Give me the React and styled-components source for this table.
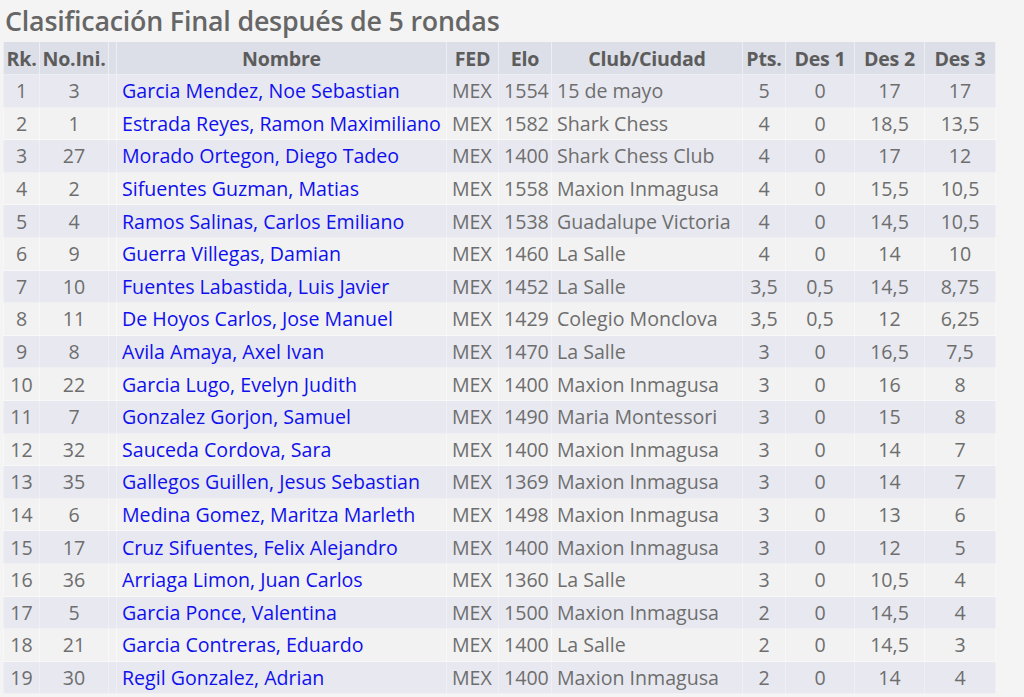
import React from "react";
import styled, { createGlobalStyle } from "styled-components";

const Global = createGlobalStyle`
  html, body { margin: 0; padding: 0; background: #f4f4f4; }
  body { font-family: "Open Sans", "Noto Sans", sans-serif; }
`;

const Page = styled.div`
  padding: 3px 0 0 3px;
  width: 992px;
`;

const Title = styled.h1`
  margin: 0 0 4px 2px;
  font-size: 26.8px;
  font-weight: 600;
  color: #666;
  line-height: 35px;
  letter-spacing: -0.2px;
`;

const Table = styled.table`
  border-collapse: collapse;
  width: 992px;
  table-layout: fixed;
  font-size: 19.6px;
  color: #6e6e6e;
`;

const Th = styled.th`
  background: #dcdfe7;
  color: #5c5c5c;
  font-weight: 700;
  height: 32px;
  padding: 0;
  text-align: center;
  border: 1px solid #eceef2;
  border-top: none;
  white-space: nowrap;
  letter-spacing: -0.2px;
`;

const Row = styled.tr`
  background: ${(p) => (p.$odd ? "#e8e9f0" : "#f2f2f2")};
  height: 32.6px;
`;

const Td = styled.td`
  padding: 0 ${(p) => (p.$pad ? "5px" : "0")};
  text-align: ${(p) => p.$align || "center"};
  border: 1px solid ${(p) => (p.$odd ? "#f0f0f4" : "#f8f8f8")};
  white-space: nowrap;
  overflow: hidden;
`;

const Link = styled.a`
  color: #1010ee;
  text-decoration: none;
`;

const cols = [36, 69, 8, 330, 52, 53, 191, 43, 69, 70, 71];

const data = [
  [1, 3, "Garcia Mendez, Noe Sebastian", 1554, "15 de mayo", "5", "0", "17", "17"],
  [2, 1, "Estrada Reyes, Ramon Maximiliano", 1582, "Shark Chess", "4", "0", "18,5", "13,5"],
  [3, 27, "Morado Ortegon, Diego Tadeo", 1400, "Shark Chess Club", "4", "0", "17", "12"],
  [4, 2, "Sifuentes Guzman, Matias", 1558, "Maxion Inmagusa", "4", "0", "15,5", "10,5"],
  [5, 4, "Ramos Salinas, Carlos Emiliano", 1538, "Guadalupe Victoria", "4", "0", "14,5", "10,5"],
  [6, 9, "Guerra Villegas, Damian", 1460, "La Salle", "4", "0", "14", "10"],
  [7, 10, "Fuentes Labastida, Luis Javier", 1452, "La Salle", "3,5", "0,5", "14,5", "8,75"],
  [8, 11, "De Hoyos Carlos, Jose Manuel", 1429, "Colegio Monclova", "3,5", "0,5", "12", "6,25"],
  [9, 8, "Avila Amaya, Axel Ivan", 1470, "La Salle", "3", "0", "16,5", "7,5"],
  [10, 22, "Garcia Lugo, Evelyn Judith", 1400, "Maxion Inmagusa", "3", "0", "16", "8"],
  [11, 7, "Gonzalez Gorjon, Samuel", 1490, "Maria Montessori", "3", "0", "15", "8"],
  [12, 32, "Sauceda Cordova, Sara", 1400, "Maxion Inmagusa", "3", "0", "14", "7"],
  [13, 35, "Gallegos Guillen, Jesus Sebastian", 1369, "Maxion Inmagusa", "3", "0", "14", "7"],
  [14, 6, "Medina Gomez, Maritza Marleth", 1498, "Maxion Inmagusa", "3", "0", "13", "6"],
  [15, 17, "Cruz Sifuentes, Felix Alejandro", 1400, "Maxion Inmagusa", "3", "0", "12", "5"],
  [16, 36, "Arriaga Limon, Juan Carlos", 1360, "La Salle", "3", "0", "10,5", "4"],
  [17, 5, "Garcia Ponce, Valentina", 1500, "Maxion Inmagusa", "2", "0", "14,5", "4"],
  [18, 21, "Garcia Contreras, Eduardo", 1400, "La Salle", "2", "0", "14,5", "3"],
  [19, 30, "Regil Gonzalez, Adrian", 1400, "Maxion Inmagusa", "2", "0", "14", "4"],
];

export default function App() {
  return (
    <Page>
      <Global />
      <Title>Clasificación Final después de 5 rondas</Title>
      <Table>
        <colgroup>
          {cols.map((w, i) => (
            <col key={i} style={{ width: w }} />
          ))}
        </colgroup>
        <thead>
          <tr>
            <Th>Rk.</Th>
            <Th>No.Ini.</Th>
            <Th></Th>
            <Th>Nombre</Th>
            <Th>FED</Th>
            <Th>Elo</Th>
            <Th>Club/Ciudad</Th>
            <Th>Pts.</Th>
            <Th>Des 1</Th>
            <Th>Des 2</Th>
            <Th>Des 3</Th>
          </tr>
        </thead>
        <tbody>
          {data.map((r, i) => {
            const odd = i % 2 === 0;
            return (
              <Row key={i} $odd={odd}>
                <Td $odd={odd}>{r[0]}</Td>
                <Td $odd={odd}>{r[1]}</Td>
                <Td $odd={odd}></Td>
                <Td $odd={odd} $align="left" $pad>
                  <Link href="#">{r[2]}</Link>
                </Td>
                <Td $odd={odd} $align="left" $pad>MEX</Td>
                <Td $odd={odd} $align="left" $pad>{r[3]}</Td>
                <Td $odd={odd} $align="left" $pad>{r[4]}</Td>
                <Td $odd={odd}>{r[5]}</Td>
                <Td $odd={odd}>{r[6]}</Td>
                <Td $odd={odd}>{r[7]}</Td>
                <Td $odd={odd}>{r[8]}</Td>
              </Row>
            );
          })}
        </tbody>
      </Table>
    </Page>
  );
}
